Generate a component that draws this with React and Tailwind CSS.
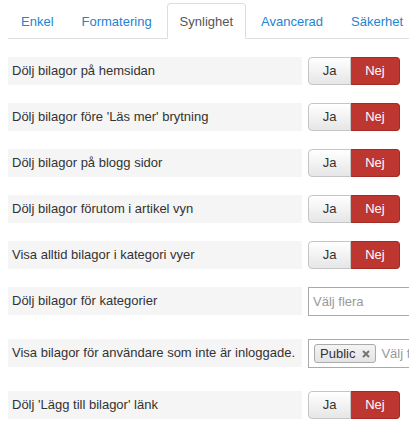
import { useState } from 'react';

const tabs = ['Enkel', 'Formatering', 'Synlighet', 'Avancerad', 'Säkerhet'];

const toggles = [
    "Dölj bilagor på hemsidan",
    "Dölj bilagor före 'Läs mer' brytning",
    'Dölj bilagor på blogg sidor',
    'Dölj bilagor förutom i artikel vyn',
    'Visa alltid bilagor i kategori vyer',
];

function Label({ children }) {
    return (
        <div className="w-[294px] h-[28px] shrink-0 bg-[#f5f5f5] pl-[4px] text-[13px] leading-[28px] text-[#333] whitespace-nowrap">
            {children}
        </div>
    );
}

function YesNo() {
    return (
        <div className="flex h-[28px] text-[13px]">
            <button className="w-[43px] h-full border border-[#c5c5c5] rounded-l-[4px] bg-gradient-to-b from-white to-[#e6e6e6] text-[#333]">
                Ja
            </button>
            <button className="w-[49px] h-full border border-[#a52a24] border-l-0 rounded-r-[4px] bg-[#bd362f] text-white">
                Nej
            </button>
        </div>
    );
}

export default function App() {
    const [active] = useState('Synlighet');

    return (
        <div className="w-[409px] h-[426px] overflow-hidden bg-white pl-[8px] font-['Liberation_Sans',Arial,sans-serif]">
            {/* Tabs */}
            <ul className="flex mt-[3px] border-b border-[#ddd] text-[13px] whitespace-nowrap">
                {tabs.map((tab) => (
                    <li key={tab} className="mr-[2px] -mb-px shrink-0">
                        <a
                            className={
                                tab === active
                                    ? 'block h-[36px] px-[12px] leading-[35px] border border-[#ddd] border-b-white rounded-t-[4px] bg-white text-[#555]'
                                    : 'block h-[36px] px-[12px] leading-[35px] border border-transparent text-[#2384d3]'
                            }
                        >
                            {tab}
                        </a>
                    </li>
                ))}
            </ul>

            {/* Options */}
            <div className="mt-[18px] flex flex-col">
                {toggles.map((t) => (
                    <div key={t} className="flex gap-[6px] mb-[18px]">
                        <Label>{t}</Label>
                        <YesNo />
                    </div>
                ))}

                <div className="flex gap-[6px] mb-[23px]">
                    <Label>Dölj bilagor för kategorier</Label>
                    <div className="w-[220px] h-[29px] shrink-0 border border-[#aaa] pl-[4px] text-[13px] leading-[27px] text-[#999]">
                        Välj flera
                    </div>
                </div>

                <div className="flex gap-[6px] mb-[23px]">
                    <Label>Visa bilagor för användare som inte är inloggade.</Label>
                    <div className="w-[220px] h-[29px] shrink-0 border border-[#aaa] flex items-center pl-[5px] gap-[5px] text-[13px] whitespace-nowrap">
                        <span className="flex items-center h-[19px] pl-[5px] pr-[5px] gap-[7px] border border-[#aaa] rounded-[3px] bg-gradient-to-b from-[#f4f4f4] to-[#e4e4e4] text-[#333] leading-[17px]">
                            Public
                            <svg width="8" height="8" viewBox="0 0 8 8">
                                <path d="M1 1L7 7M7 1L1 7" stroke="#777" strokeWidth="2" />
                            </svg>
                        </span>
                        <span className="text-[#999]">Välj flera</span>
                    </div>
                </div>

                <div className="flex gap-[6px]">
                    <Label>Dölj 'Lägg till bilagor' länk</Label>
                    <YesNo />
                </div>
            </div>
        </div>
    );
}
